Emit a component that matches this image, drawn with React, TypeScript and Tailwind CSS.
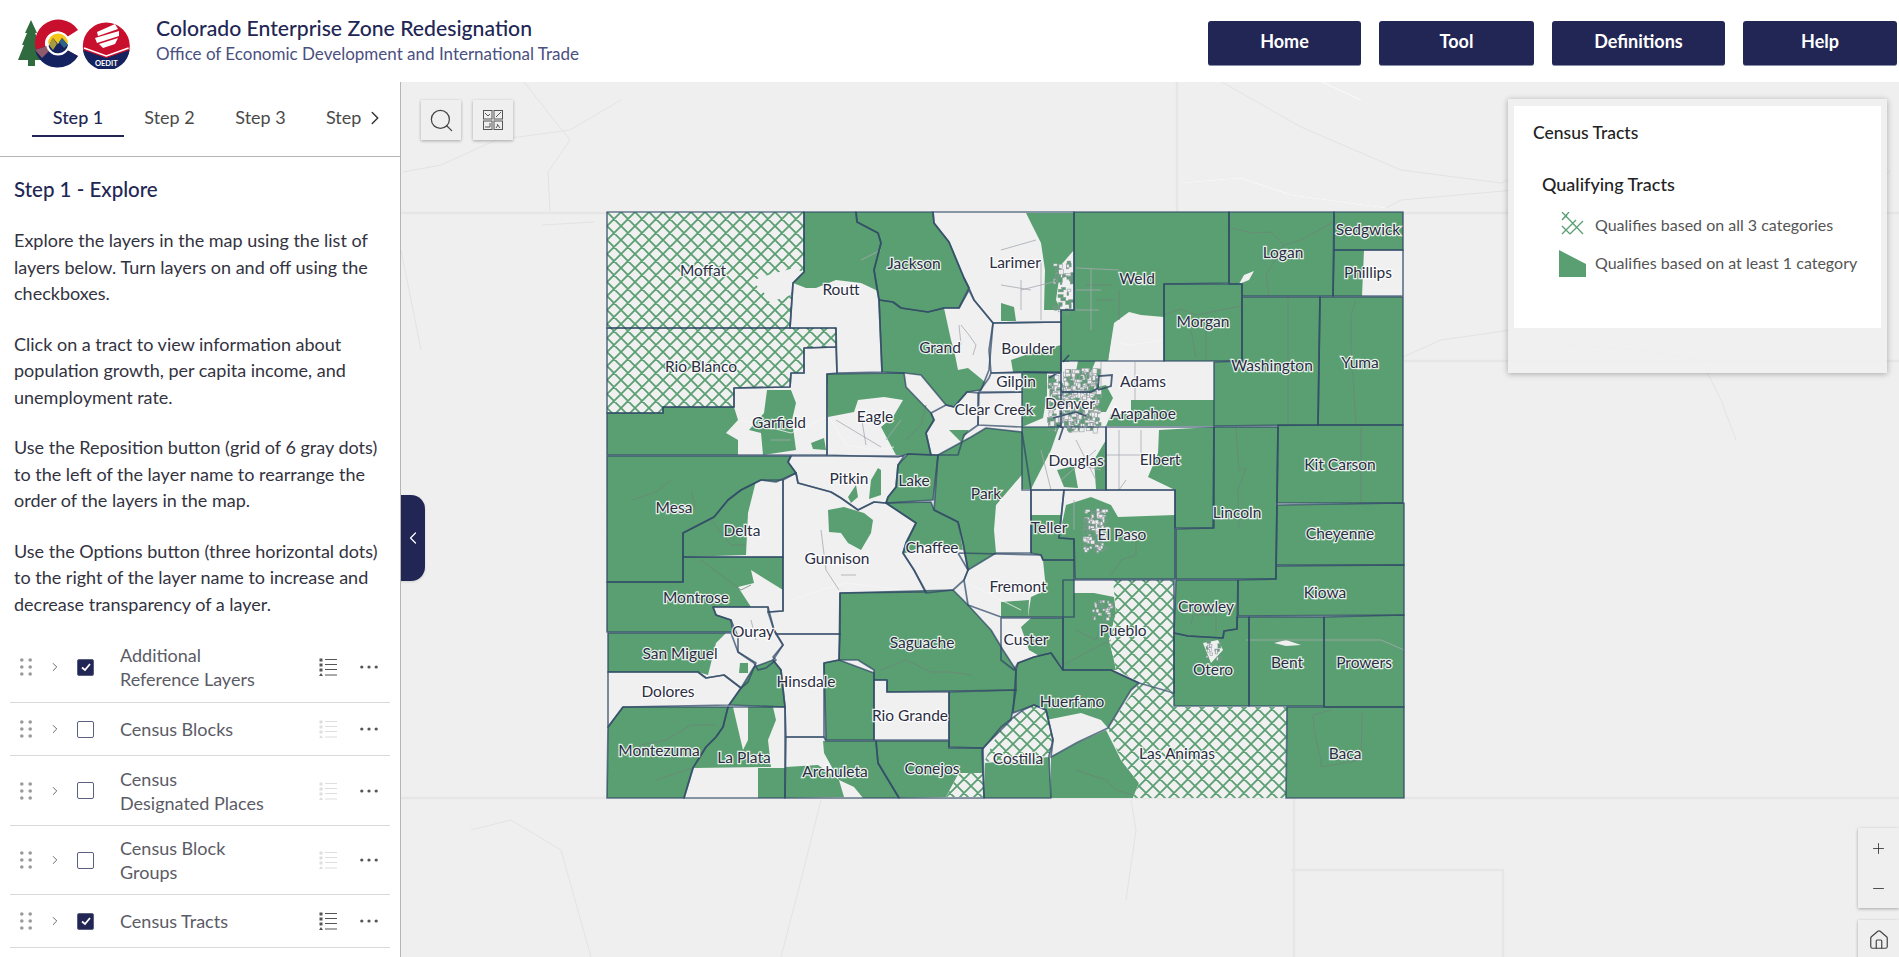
import { ChevronLeft, ChevronRight, Home, Minus, Plus, Search } from "lucide-react";

const NAVY = "#222654";
const FONT = "font-['Lato','Open_Sans',sans-serif]";

const paragraphs = [
  "Explore the layers in the map using the list of layers below. Turn layers on and off using the checkboxes.",
  "Click on a tract to view information about population growth, per capita income, and unemployment rate.",
  "Use the Reposition button (grid of 6 gray dots) to the left of the layer name to rearrange the order of the layers in the map.",
  "Use the Options button (three horizontal dots) to the right of the layer name to increase and decrease transparency of a layer.",
];

const layers = [
  { lines: ["Additional", "Reference Layers"], checked: true, h: "h-[71px]" },
  { lines: ["Census Blocks"], checked: false, h: "h-[53px]" },
  { lines: ["Census", "Designated Places"], checked: false, h: "h-[70px]" },
  { lines: ["Census Block", "Groups"], checked: false, h: "h-[69px]" },
  { lines: ["Census Tracts"], checked: true, h: "h-[53px]" },
];

// county outlines, page coordinates
const counties = [
  "606,212 803,212 803,272 792,283 789,328 606,328",
  "606,328 835,328 835,347 803,348 803,373 790,373 789,387 733,388 733,407 662,407 662,413 606,413",
  "803,212 855,212 856,222 877,233 880,243 873,270 878,300 881,372 836,373 835,328 789,328 792,283 803,272",
  "855,212 932,212 933,223 948,242 963,278 968,288 958,308 943,308 927,312 900,308 892,302 878,300 873,270 880,243 877,233 856,222",
  "878,300 892,302 900,308 927,312 943,308 958,308 968,290 973,300 992,323 988,370 980,390 966,392 953,407 945,405 920,375 904,373 881,372",
  "826,374 903,373 905,387 930,413 933,420 925,433 930,455 907,454 897,457 857,456 826,455",
  "733,388 789,387 790,373 803,373 803,348 835,347 836,373 826,374 826,455 606,455 606,413 662,413 662,407 733,407",
  "606,456 790,456 787,462 795,473 775,482 760,480 740,490 727,500 713,517 682,533 682,582 606,582",
  "682,533 713,517 727,500 740,490 760,480 782,480 782,557 682,557",
  "606,582 682,582 682,557 782,557 782,611 767,612 767,607 712,607 715,615 730,620 732,632 606,632",
  "712,607 767,607 773,630 775,633 782,645 772,657 775,660 765,668 757,670 753,663 737,652 737,637 730,620 715,615",
  "607,633 730,633 737,652 755,663 747,682 740,688 723,675 705,678 697,672 607,672",
  "607,672 697,672 705,678 723,675 740,688 728,705 622,707 607,727",
  "728,705 740,688 753,667 772,660 780,670 784,707",
  "622,707 727,707 722,727 715,737 705,747 692,768 683,798 606,798 607,727",
  "727,707 784,707 784,798 683,798 692,768 705,747 715,737 722,727",
  "775,634 839,634 838,660 823,663 823,737 785,737 784,707 780,670 772,660 782,645",
  "795,473 797,483 830,492 840,498 857,510 873,502 885,503 915,523 905,543 902,553 913,570 925,592 839,593 839,634 775,634 773,630 767,612 782,611 782,480",
  "790,456 903,456 897,465 895,487 887,497 885,503 873,502 857,510 840,498 830,492 797,483 795,473 787,462",
  "897,465 907,454 937,455 932,500 885,503 887,497 895,487",
  "885,503 930,502 933,510 957,522 962,543 967,570 963,580 952,590 925,593 913,570 902,553 905,543 915,523",
  "937,455 970,437 985,428 1021,432 1030,490 1030,553 995,553 967,570 962,543 957,522 933,510",
  "930,413 945,405 953,407 966,392 978,393 977,425 963,435 957,455 930,455 925,433 933,420",
  "977,393 1021,392 1021,427 977,425",
  "990,373 1021,372 1021,392 978,392 988,378",
  "992,323 1060,322 1060,372 990,373 988,350",
  "932,212 1073,212 1073,310 1060,310 1060,322 992,323 973,300 968,288 963,278 948,242 933,223",
  "1073,212 1228,212 1228,283 1163,284 1163,361 1060,361 1060,310 1073,310",
  "1163,284 1241,284 1241,361 1163,361",
  "1228,212 1333,212 1332,296 1241,296 1241,284 1228,284",
  "1333,212 1402,212 1402,250 1333,250",
  "1333,250 1402,250 1402,296 1332,296",
  "1319,297 1402,297 1402,425 1317,425",
  "1241,297 1319,297 1317,425 1213,426 1213,362 1241,361",
  "1105,427 1213,427 1213,528 1174,528 1174,490 1105,490",
  "1021,427 1105,427 1105,490 1021,490",
  "1213,427 1277,427 1275,579 1175,579 1175,529 1212,528",
  "1277,425 1402,425 1402,503 1276,503",
  "1276,505 1403,503 1403,565 1275,565",
  "1275,566 1403,565 1403,615 1237,616 1237,580 1275,579",
  "1175,580 1237,580 1236,629 1223,631 1222,638 1187,636 1173,633",
  "1173,633 1187,636 1222,638 1223,631 1236,629 1236,617 1248,617 1248,706 1173,706",
  "1248,617 1323,617 1323,706 1248,706",
  "1323,617 1403,615 1403,707 1323,707",
  "1286,707 1403,707 1403,798 1285,798",
  "1062,580 1173,580 1173,693 1138,683 1110,670 1062,670",
  "1015,670 1017,663 1033,657 1050,653 1062,670 1110,670 1138,683 1130,690 1107,728 1077,742 1050,757 1052,740 1045,710 1033,705 1012,713",
  "981,750 1000,727 1022,710 1033,705 1045,710 1052,740 1048,756 1050,798 983,798",
  "1000,618 1062,618 1062,670 1050,653 1033,657 1017,663 1013,670 1000,660",
  "839,593 952,590 967,605 990,630 1002,650 1015,670 1015,690 886,692 886,680 873,680 873,670 857,660 838,660",
  "823,663 838,660 873,673 873,740 825,740",
  "873,680 886,680 886,692 948,692 948,740 873,740",
  "948,692 1015,690 1010,720 982,748 948,747",
  "875,741 948,741 948,748 982,748 983,798 898,798 883,773 877,763",
  "785,737 823,737 825,741 875,741 877,763 883,773 898,798 784,798",
  "957,553 1040,555 1042,560 1073,560 1073,617 1000,617 967,605 963,580 967,570",
  "1030,490 1063,490 1058,538 1073,539 1073,560 1042,560 1040,555 1030,553",
  "1063,490 1174,490 1174,579 1074,579 1073,539 1058,538",
];

// fully green counties and the green parts of the others
const greens = [
  "803,212 855,212 856,222 877,233 880,243 873,270 877,291 860,283 835,280 815,288 805,288 792,283 803,272",
  "855,212 932,212 933,223 948,242 963,278 968,288 958,308 943,308 927,312 900,308 892,302 878,300 873,270 880,243 877,233 856,222",
  "878,300 892,302 900,308 927,312 943,308 950,340 953,350 957,370 967,368 978,377 984,382 980,390 966,392 953,407 945,405 920,375 904,373 881,372",
  "826,374 903,373 905,387 930,413 933,420 925,433 930,455 895,455 880,427 892,417 902,400 883,397 857,400 853,412 827,417",
  "606,413 662,413 662,407 733,407 737,420 725,433 737,440 737,455 606,455",
  "766,390 790,390 795,403 791,420 795,450 762,455 760,433 748,430 763,413",
  "810,443 823,438 825,450 812,449",
  "606,456 790,456 787,462 795,473 775,482 760,480 740,490 727,500 713,517 682,533 682,582 606,582",
  "682,533 713,517 727,500 740,490 755,481 747,513 745,555 682,557",
  "606,582 682,582 682,557 782,557 782,590 750,570 753,583 737,587 750,607 712,607 715,615 730,620 732,632 606,632",
  "607,633 725,633 715,643 707,675 697,672 607,672",
  "739,663 747,663 747,673 738,673",
  "728,705 740,688 753,667 772,660 780,670 784,707",
  "622,707 727,707 722,727 715,737 705,747 692,768 683,798 606,798 607,727",
  "727,707 732,707 735,720 742,750 747,740 747,707 772,707 775,720 767,740 770,767 693,768 705,747 715,737 722,727",
  "757,768 784,768 784,798 757,798",
  "827,510 843,507 863,513 872,520 870,533 860,550 847,543 840,533 828,532",
  "847,497 855,485 857,497 850,503",
  "897,465 907,454 937,455 932,500 885,503 887,497 895,487",
  "885,503 930,502 933,510 957,522 962,550 925,545 905,553 902,553 905,543 915,523",
  "937,455 970,437 985,428 1021,432 1025,470 995,505 993,530 995,553 967,570 962,543 957,522 933,510",
  "948,430 968,430 960,442",
  "1010,360 1030,353 1060,345 1060,372 1040,373 1012,372",
  "1021,373 1046,372 1046,395 1042,418 1021,427",
  "1060,340 1068,340 1068,362 1060,362",
  "1085,345 1103,340 1090,372 1075,372 1078,355",
  "1092,388 1105,385 1112,398 1105,412 1095,412",
  "1025,213 1073,213 1073,250 1060,265 1055,300 1060,310 1043,310 1044,270 1040,243",
  "1000,303 1013,307 1015,321 1000,321",
  "1073,212 1228,212 1228,283 1163,284 1163,317 1140,315 1128,312 1113,323 1107,361 1060,361 1060,310 1073,310",
  "1085,340 1100,320 1113,310 1112,323 1107,361 1065,361 1075,340",
  "1163,284 1241,284 1241,361 1163,361",
  "1228,212 1333,212 1332,296 1241,296 1241,284 1228,284",
  "1333,212 1402,212 1402,250 1333,250",
  "1333,250 1363,250 1361,296 1332,296",
  "1319,297 1402,297 1402,425 1317,425",
  "1241,297 1319,297 1317,425 1213,426 1213,362 1241,361",
  "1130,400 1213,400 1213,426 1105,426 1110,414 1130,414",
  "1021,427 1058,427 1050,450 1030,489 1021,489",
  "1056,470 1073,466 1077,488 1063,487",
  "1093,460 1105,440 1105,489 1095,489",
  "1158,430 1213,427 1213,528 1174,528 1174,490 1147,477 1157,453",
  "1213,427 1277,427 1275,579 1175,579 1175,529 1212,528",
  "1277,425 1402,425 1402,503 1276,503",
  "1276,505 1403,503 1403,565 1275,565",
  "1275,566 1403,565 1403,615 1237,616 1237,580 1275,579",
  "1175,580 1237,580 1236,629 1223,631 1222,638 1187,636 1173,633",
  "1173,633 1187,636 1222,638 1223,631 1236,629 1236,617 1248,617 1248,706 1173,706",
  "1248,617 1323,617 1323,706 1248,706",
  "1323,617 1403,615 1403,707 1323,707",
  "1286,707 1403,707 1403,798 1285,798",
  "1062,593 1074,593 1093,593 1113,597 1115,613 1108,640 1113,660 1115,670 1062,670",
  "1015,670 1017,663 1033,657 1050,653 1062,670 1110,670 1138,683 1130,690 1107,728 1100,720 1080,713 1045,720 1045,710 1033,705 1012,713",
  "1050,757 1078,742 1105,730 1120,760 1138,783 1132,798 1050,798",
  "984,763 1048,757 1050,798 983,798",
  "1020,627 1030,618 1062,618 1062,668 1050,653 1040,657 1028,650",
  "839,593 952,590 967,605 990,630 1002,650 1015,670 1015,690 886,692 886,680 873,680 873,670 857,660 838,660",
  "823,663 838,660 873,673 873,740 825,740",
  "948,692 1015,690 1010,720 982,748 948,747",
  "875,741 948,741 948,748 982,748 982,773 958,773 945,797 898,798 883,773 877,763",
  "822,741 875,741 877,763 883,773 898,798 862,798 853,787 838,780 823,753",
  "785,767 817,765 838,780 843,797 784,798",
  "1042,560 1073,560 1073,617 1027,617 1030,597 1045,590",
  "1000,602 1028,600 1027,617 1000,617",
  "1030,515 1060,515 1058,538 1073,539 1073,560 1042,560 1040,555 1030,553",
  "1117,517 1174,515 1174,579 1074,579 1073,539 1058,538 1065,505 1090,497 1110,505",
  "877,468 880,470 880,495 868,499 870,480",
];

const hatches = [
  "606,212 803,212 803,272 792,283 789,328 606,328",
  "606,328 835,328 835,347 803,348 803,373 790,373 789,387 733,388 733,407 662,407 662,413 606,413",
  "1107,728 1138,683 1173,693 1173,707 1286,707 1285,798 1132,798 1138,783 1120,760",
  "1112,580 1173,580 1173,692 1140,683 1115,670 1113,660 1108,640 1115,613",
  "983,762 1000,727 1022,710 1033,705 1045,710 1052,740 1048,756",
  "945,797 958,773 982,773 983,797",
];

const cutouts = ["753,280 767,275 793,268 802,272 792,283 790,295 775,300 770,305 765,295 755,285"];

const tractLines = [
  "M1230 228 L1252 233 L1270 232 L1283 245 L1300 240 L1332 222",
  "M1283 245 L1265 275 L1268 296",
  "M1355 300 L1350 315 L1350 345 L1355 425",
  "M1287 297 L1287 425",
  "M1163 315 L1180 309 L1195 315 L1240 306",
  "M1190 330 L1195 358 M1205 330 L1205 360",
  "M1235 427 L1238 470 L1245 468 L1237 490 L1238 527",
  "M1360 427 L1360 503",
  "M1330 710 L1312 715 L1313 730 L1320 760 L1320 767 L1360 760 L1361 712",
  "M1190 625 L1192 615 L1215 615 L1215 635",
  "M1074 630 L1095 640 L1100 625 L1115 612",
  "M1110 540 L1135 535 L1135 555 L1120 560 L1110 575",
  "M1062 665 L1090 650 L1110 640",
  "M630 500 L655 492 L670 480 M690 490 L695 510",
  "M700 560 L720 575 L740 590 L750 585",
  "M640 745 L665 740 L690 725 L715 725 M655 780 L690 768",
  "M880 670 L905 660 L930 672 L950 672 L970 675",
  "M1075 770 L1105 780 L1115 790 L1132 795",
  "M710 520 L730 545 L745 545",
  "M905 440 L920 425 L925 405",
  "M1118 290 L1118 320 M1085 285 L1112 285 M1095 300 L1113 300",
];

const whiteLines = ["M740 420 L790 433 L826 417 M830 420 L845 445 L875 450 L893 447", "M790 600 L820 590 L845 583 L900 590 M960 580 L1000 600 L1020 610", "M1163 340 L1130 345 L1118 343"];

const grayLines = [
  "M960 325 L968 335 L975 345 L972 355",
  "M835 420 L860 435 L880 447 M860 415 L865 445 M885 440 L900 420",
  "M1075 268 L1118 270 M1090 268 L1090 330 M1075 290 L1100 290 M1075 310 L1098 310 M1020 290 L1060 280 M1000 250 L1035 240",
  "M1020 280 L1020 310 M1040 260 L1040 320 M1000 285 L1030 290",
  "M1134 362 L1134 400 M1118 430 L1118 490 M1105 455 L1145 455 M1125 480 L1118 490 M1140 430 L1140 455",
  "M860 260 L880 250",
  "M820 530 L825 570 L838 590 M840 575 L855 575",
  "M1073 500 L1073 530 M1040 450 L1050 490",
  "M958 325 L960 345",
  "M770 440 L790 440 M750 620 L755 640",
  "M1245 640 L1300 640 L1380 640 L1403 650",
  "M1100 362 L1100 398 M1063 462 L1100 470 M1075 440 L1095 480 M1060 480 L1095 450",
];

const labels: [string, number, number][] = [
  ["Moffat", 702, 270], ["Jackson", 913, 263], ["Routt", 840, 289], ["Larimer", 1014, 262],
  ["Weld", 1136, 278], ["Logan", 1282, 252], ["Sedgwick", 1367, 229], ["Phillips", 1367, 272],
  ["Morgan", 1202, 321], ["Washington", 1271, 365], ["Yuma", 1359, 362], ["Grand", 939, 347],
  ["Boulder", 1027, 348], ["Gilpin", 1015, 381], ["Adams", 1142, 381], ["Clear Creek", 993, 409],
  ["Denver", 1069, 403], ["Arapahoe", 1142, 413], ["Rio Blanco", 700, 366], ["Garfield", 778, 422],
  ["Eagle", 874, 416], ["Pitkin", 848, 478], ["Lake", 913, 480], ["Park", 985, 493],
  ["Douglas", 1075, 460], ["Elbert", 1159, 459], ["Kit Carson", 1339, 464], ["Mesa", 673, 507],
  ["Delta", 741, 530], ["Gunnison", 836, 558], ["Chaffee", 931, 547], ["Teller", 1048, 527],
  ["El Paso", 1121, 534], ["Lincoln", 1236, 512], ["Cheyenne", 1339, 533], ["Fremont", 1017, 586],
  ["Kiowa", 1324, 592], ["Crowley", 1205, 606], ["Montrose", 695, 597], ["Ouray", 752, 631],
  ["Saguache", 921, 642], ["Custer", 1025, 639], ["Pueblo", 1122, 630], ["Otero", 1212, 669],
  ["Bent", 1286, 662], ["Prowers", 1363, 662], ["San Miguel", 679, 653], ["Dolores", 667, 691],
  ["Hinsdale", 805, 681], ["Rio Grande", 909, 715], ["Huerfano", 1071, 701], ["Montezuma", 658, 750],
  ["La Plata", 743, 757], ["Archuleta", 834, 771], ["Conejos", 931, 768], ["Costilla", 1017, 758],
  ["Las Animas", 1176, 753], ["Baca", 1344, 753],
];

// small urban tracts, same layout every render
function makeTracts(count: number, x: number, y: number, w: number, h: number, size: number, seed: number, greenShare = 0.35) {
  let s = seed;
  const next = () => {
    s = (s * 1664525 + 1013904223) % 4294967296;
    return s / 4294967296;
  };
  return Array.from({ length: count }, () => ({
    x: x + next() * w,
    y: y + next() * h,
    w: 1.5 + next() * size,
    h: 1.5 + next() * size,
    green: next() < greenShare,
  }));
}

const tracts = [
  ...makeTracts(90, 1046, 375, 16, 50, 6, 5, 0.55),
  ...makeTracts(340, 1062, 368, 34, 60, 4, 17, 0.4),
  ...makeTracts(110, 1082, 508, 22, 42, 3, 91),
  ...makeTracts(40, 1052, 258, 18, 55, 4, 33, 0.65),
  ...makeTracts(30, 1090, 600, 22, 18, 2.5, 55, 0.2),
  ...makeTracts(14, 1205, 640, 15, 18, 3, 71, 0.4),
];

function MapCanvas() {
  return (
    <svg viewBox="400 82 1499 875" className="absolute inset-0 h-[875px] w-[1499px]">
      <defs>
        <pattern id="hatch" width="14" height="14" patternUnits="userSpaceOnUse" patternTransform="translate(606 212)">
          <path d="M-2 2 L2 -2 M0 14 L14 0 M12 16 L16 12 M-2 12 L2 16 M0 0 L14 14 M12 -2 L16 2" stroke="#5a9f72" strokeWidth="1.8" fill="none" />
        </pattern>
      </defs>

      {/* basemap */}
      <g fill="none">
        <path d="M400 213 H606 M1402 213 H1899 M400 798 H1899 M1176 82 V212 M1402 361 H1899 M1293 798 V957 M1290 870 H1502 V957" stroke="#e6e6e6" strokeWidth="2.5" />
        <path d="M523 82 L569 140 L547 172 L549 212 M541 225 L593 222 M1221 82 L1300 127 L1400 170 L1500 183 L1514 177 M402 172 L440 165 L495 140 L569 130 L620 100 M1180 183 L1240 178 L1290 195 L1385 208 L1400 200 L1514 190 M1530 325 L1570 345 L1640 350 L1700 360 L1720 400 L1735 440 M1890 170 L1860 200 M400 250 L420 350 M470 830 L510 820 L560 850 L590 957 M1130 800 L1135 830 L1125 900 M820 800 L800 880 L780 957 M1395 360 L1440 340 L1510 330" stroke="#e3e3e3" strokeWidth="1" />
        <path d="M1321 82 L1360 100 M1180 183 L1240 178 L1290 195 L1385 208" stroke="#f8f8f8" strokeWidth="1.2" />
      </g>

      {/* state */}
      <polygon points="606,212 1402,212 1403,798 606,798" fill="#f0f0f1" />
      <g fill="#5a9f72">
        {greens.map((p) => (
          <polygon key={p} points={p} />
        ))}
      </g>
      <g>
        {hatches.map((p) => (
          <polygon key={p} points={p} fill="#f0f0f1" />
        ))}
        {hatches.map((p) => (
          <polygon key={p} points={p} fill="url(#hatch)" />
        ))}
      </g>
      {cutouts.map((p) => (
        <polygon key={p} points={p} fill="#f0f0f1" />
      ))}
      <path d="M1243 275 L1253 271 L1248 280 L1238 284 Z M1202 643 L1217 640 L1222 650 L1210 663 Z M1273 643 L1285 640 L1300 645 L1285 646 Z" fill="#f0f0f1" />

      <g fill="none" strokeLinejoin="round">
        {tractLines.map((d) => (
          <path key={d} d={d} stroke="#6b8677" strokeWidth="0.8" />
        ))}
        {whiteLines.map((d) => (
          <path key={d} d={d} stroke="#f6f6f6" strokeWidth="0.8" />
        ))}
        {grayLines.map((d) => (
          <path key={d} d={d} stroke="#a5aab0" strokeWidth="0.8" />
        ))}
      </g>

      {tracts.map((t, i) => (
        <rect key={i} x={t.x} y={t.y} width={t.w} height={t.h} fill={t.green ? "#5a9f72" : "#eceded"} stroke="#8b9499" strokeWidth="0.5" />
      ))}

      <g fill="none" stroke="#2f4865" strokeOpacity="0.72" strokeWidth="1.7" strokeLinejoin="round">
        {counties.map((p) => (
          <polygon key={p} points={p} />
        ))}
      </g>
      <path d="M1062 362 L1068 355 M1048 378 L1058 372 M1022 372 L1060 373 M1060 362 V428 M1052 418 L1075 412 L1085 416 M1060 392 L1090 392 L1097 388 L1098 376 L1111 375 L1110 386 L1097 390 M1056 425 L1062 428 L1058 440" fill="none" stroke="#2f4865" strokeOpacity="0.85" strokeWidth="1.8" />

      <g className={`${FONT} text-[15.5px]`} fill="#2b2d42" stroke="#ffffff" strokeWidth="2.5" strokeOpacity="0.85" textAnchor="middle" dominantBaseline="central" paintOrder="stroke">
        {labels.map(([name, x, y]) => (
          <text key={name} x={x} y={y}>
            {name}
          </text>
        ))}
      </g>
    </svg>
  );
}

function ColoradoLogo() {
  return (
    <svg viewBox="0 0 118 56" className="h-[56px] w-[118px] shrink-0">
      <path d="M15 7 L21 20 L19 20 L24 30 L22 30 L28 47 H19 V53 H12 V47 H2 L8 32 L6 32 L11 20 L9 20 Z" fill="#2f6b3f" />
      <path d="M62 17 A23.5 23.5 0 1 0 62 43 L51 37 A12 12 0 1 1 51 24 Z" fill="#c8102e" />
      <path d="M19 37 A23.5 23.5 0 0 0 62 43 L51 37 A12 12 0 0 1 31 33 Z" fill="#14235f" />
      <path d="M19 37 L31 33 L33 38 L26 45 Z" fill="#8f5a6b" />
      <circle cx="42" cy="30.5" r="12" fill="#ffffff" />
      <path d="M32 30.5 A10 10 0 0 1 52 30.5 Z" fill="#f5c518" />
      <path d="M32.5 33 L37 25 L42 31 L46 25 L52 32 A10 10 0 0 1 32.5 33 Z" fill="#14235f" />
      <path d="M33 32 L37 25 L41 31 L37 37 Z" fill="#a99a3f" />
      <path d="M43 29 L46 25 L52 32 L48 35 Z" fill="#31638a" />
      <circle cx="90.3" cy="33" r="23.5" fill="#c8102e" />
      <path d="M67 37 L90.3 45 L113.6 37 A23.5 23.5 0 0 1 67 37 Z" fill="#14235f" />
      <path d="M68 35 L90.3 43 L112.6 35" stroke="#ffffff" strokeWidth="1.5" fill="none" />
      <path d="M81 19 L99 11 L102 16 L82 23 Z M79 25 L103 18 L103 23 L81 30 Z M83 31 L102 25 L99 31 L87 35 Z" fill="#ffffff" />
      <text x="90.3" y="52.5" textAnchor="middle" fill="#ffffff" className="font-['Lato',sans-serif] text-[7.5px] font-bold">
        OEDIT
      </text>
    </svg>
  );
}

function DragDots() {
  return (
    <svg viewBox="0 0 12 18" className="h-[18px] w-3 fill-[#9a9a9a]">
      {[2, 9, 16].map((y) => (
        <g key={y}>
          <circle cx="1.8" cy={y} r="1.8" />
          <circle cx="10.2" cy={y} r="1.8" />
        </g>
      ))}
    </svg>
  );
}

function LegendIcon({ active }: { active: boolean }) {
  const color = active ? "#555555" : "#dedede";
  return (
    <svg viewBox="0 0 18 18" className="h-[18px] w-[18px]" fill={color}>
      <rect x="0.5" y="0.5" width="3" height="3" />
      <rect x="0.5" y="5.5" width="3" height="3" />
      <rect x="0.5" y="10.5" width="3" height="3" />
      <path d="M2 15 L4 18 H0 Z" />
      <path d="M6 1.5 H18 M6 6.5 H18 M6 11.5 H18 M6 17 H18" stroke={color} strokeWidth="1.2" />
    </svg>
  );
}

function LayerRow({ lines, checked, h }: { lines: string[]; checked: boolean; h: string }) {
  return (
    <div className={`flex items-center border-b border-[#d9d9d9] ${h}`}>
      <div className="ml-[10px] w-[23px]">
        <DragDots />
      </div>
      <ChevronRight className="ml-[5px] h-[14px] w-[14px] text-[#555555]" strokeWidth={1.5} />
      <div className={`ml-[15px] flex h-[17px] w-[17px] items-center justify-center rounded-[2px] border-[1.5px] border-[#5a5e80] ${checked ? "bg-[#222654]" : "bg-white"}`}>
        {checked ? (
          <svg viewBox="0 0 12 12" className="h-3 w-3" fill="none" stroke="#ffffff" strokeWidth="1.8">
            <path d="M2 6.5 L5 9 L10 3" />
          </svg>
        ) : null}
      </div>
      <div className="ml-[26px] flex-1 text-[18px] leading-[24px] text-[#5b5b66]">
        {lines.map((line) => (
          <div key={line}>{line}</div>
        ))}
      </div>
      <LegendIcon active={checked} />
      <svg viewBox="0 0 20 4" className="ml-[23px] mr-[12px] h-1 w-[18px] fill-[#555555]">
        <circle cx="2" cy="2" r="1.8" />
        <circle cx="10" cy="2" r="1.8" />
        <circle cx="18" cy="2" r="1.8" />
      </svg>
    </div>
  );
}

function Sidebar() {
  return (
    <aside className="h-full w-[401px] shrink-0 overflow-hidden border-r border-[#b5b5b5] bg-white">
      <div className="flex h-[75px] border-b border-[#b5b5b5] pl-[32px] pt-[22px] text-[18px]">
        <div className="h-[33px] w-[92px] border-b-[2px] border-[#222654] text-center font-medium text-[#222654]">Step 1</div>
        <div className="w-[91px] text-center text-[#4a4a4a]">Step 2</div>
        <div className="w-[91px] text-center text-[#4a4a4a]">Step 3</div>
        <div className="w-[58px] pl-[20px] text-[#4a4a4a]">Step</div>
        <ChevronRight className="mt-[3px] h-[22px] w-[22px] text-[#333333]" strokeWidth={1.6} />
      </div>
      <div className="px-[14px] pt-[19px]">
        <h2 className="text-[20.5px] leading-[26px] font-medium text-[#222654]">Step 1 - Explore</h2>
        <div className="mt-[25px]">
          {paragraphs.map((p) => (
            <p key={p} className="mb-[24px] w-[372px] text-[18px] leading-[26.5px] text-[#33333f]">
              {p}
            </p>
          ))}
        </div>
      </div>
      <div className="mx-[10px] -mt-[9px]">
        {layers.map((layer) => (
          <LayerRow key={layer.lines.join(" ")} {...layer} />
        ))}
      </div>
    </aside>
  );
}

function Legend() {
  return (
    <div className="absolute top-[17px] right-[12px] h-[274px] w-[379px] bg-[#f0f0f0]/90 px-[6px] pt-[7px] shadow-[0_1px_6px_rgba(0,0,0,0.3)]">
      <div className="h-[222px] bg-white pl-[19px] pt-[16px]">
        <div className="text-[17.5px] leading-[22px] font-medium text-[#222222]">Census Tracts</div>
        <div className="mt-[28px] ml-[9px] text-[18px] leading-[24px] font-medium text-[#222222]">Qualifying Tracts</div>
        <div className="mt-[14px] ml-[26px] flex h-[30px] items-center gap-[9px] text-[16px] text-[#555555]">
          <svg viewBox="0 0 27 27" className="h-[27px] w-[27px]" fill="none" stroke="#5a9f72" strokeWidth="1.3">
            <path d="M3 0 L24 22 M3 8 L10 0 M3 22 L17 8 M11 22 L24 9 M8 3 L3 8 M3 14 L11 22" />
          </svg>
          Qualifies based on all 3 categories
        </div>
        <div className="mt-[8px] ml-[26px] flex h-[30px] items-center gap-[9px] text-[16px] text-[#555555]">
          <svg viewBox="0 0 27 27" className="h-[27px] w-[27px]">
            <path d="M0 0 L27 14 V27 H0 Z" fill="#5a9f72" />
          </svg>
          Qualifies based on at least 1 category
        </div>
      </div>
    </div>
  );
}

const navItems = [
  { label: "Home", w: "w-[153px]" },
  { label: "Tool", w: "w-[155px]" },
  { label: "Definitions", w: "w-[173px]" },
  { label: "Help", w: "w-[154px]" },
];

export default function App() {
  return (
    <div className={`flex h-screen w-full flex-col overflow-hidden bg-white ${FONT}`}>
      <header className="flex h-[82px] shrink-0 items-center pl-[16px]">
        <ColoradoLogo />
        <div className="ml-[22px] -mt-[1px]">
          <div className="text-[21.2px] leading-[26px] font-medium text-[#222654]">Colorado Enterprise Zone Redesignation</div>
          <div className="mt-[1px] text-[17px] leading-[24px] text-[#4a5080]">Office of Economic Development and International Trade</div>
        </div>
        <nav className="ml-auto mr-[2px] mt-[4px] flex gap-[18px]">
          {navItems.map((item) => (
            <button
              key={item.label}
              type="button"
              style={{ backgroundColor: NAVY }}
              className={`h-[45px] rounded-[3px] border-b border-[#8a8da8] pb-[3px] text-[18px] font-bold text-white ${item.w}`}
            >
              {item.label}
            </button>
          ))}
        </nav>
      </header>

      <div className="flex min-h-0 flex-1">
        <Sidebar />
        <main className="relative flex-1 overflow-hidden bg-[#efefef]">
          <MapCanvas />

          <button type="button" className="absolute top-[18px] left-[20px] flex h-10 w-10 items-center justify-center bg-[#efefef] shadow-[0_1px_3px_rgba(0,0,0,0.3)]">
            <Search className="h-[27px] w-[27px] text-[#444444]" strokeWidth={1.1} />
          </button>
          <button type="button" className="absolute top-[18px] left-[72px] flex h-10 w-10 items-center justify-center bg-[#efefef] shadow-[0_1px_3px_rgba(0,0,0,0.3)]">
            <svg viewBox="0 0 20 20" className="h-5 w-5" fill="none" stroke="#555555" strokeWidth="1">
              <rect x="0.5" y="0.5" width="8.5" height="8.5" />
              <rect x="11" y="0.5" width="8.5" height="8.5" />
              <rect x="0.5" y="11" width="8.5" height="8.5" />
              <rect x="11" y="11" width="8.5" height="8.5" />
              <path d="M2 3 L5 6 L7 4 M13 7 L18 2 M2 17 H7 V13 M14 14 L17 18 M13 18 L15 15" />
            </svg>
          </button>

          <Legend />

          <div className="absolute top-[413px] -left-px flex h-[86px] w-[25px] items-center justify-center rounded-r-[14px] bg-[#222654] shadow-sm">
            <ChevronLeft className="h-[20px] w-[20px] text-white" strokeWidth={1.5} />
          </div>

          <div className="absolute top-[746px] right-0 w-[41px] bg-[#efefef] shadow-[0_1px_3px_rgba(0,0,0,0.3)]">
            <div className="flex h-10 items-center justify-center">
              <Plus className="h-[17px] w-[17px] text-[#333333]" strokeWidth={1.2} />
            </div>
            <div className="flex h-10 items-center justify-center">
              <Minus className="h-[17px] w-[17px] text-[#333333]" strokeWidth={1.2} />
            </div>
          </div>
          <div className="absolute top-[838px] right-0 flex h-10 w-[41px] items-center justify-center bg-[#efefef] shadow-[0_1px_3px_rgba(0,0,0,0.3)]">
            <Home className="h-[22px] w-[22px] text-[#444444]" strokeWidth={1.3} />
          </div>
        </main>
      </div>
    </div>
  );
}
